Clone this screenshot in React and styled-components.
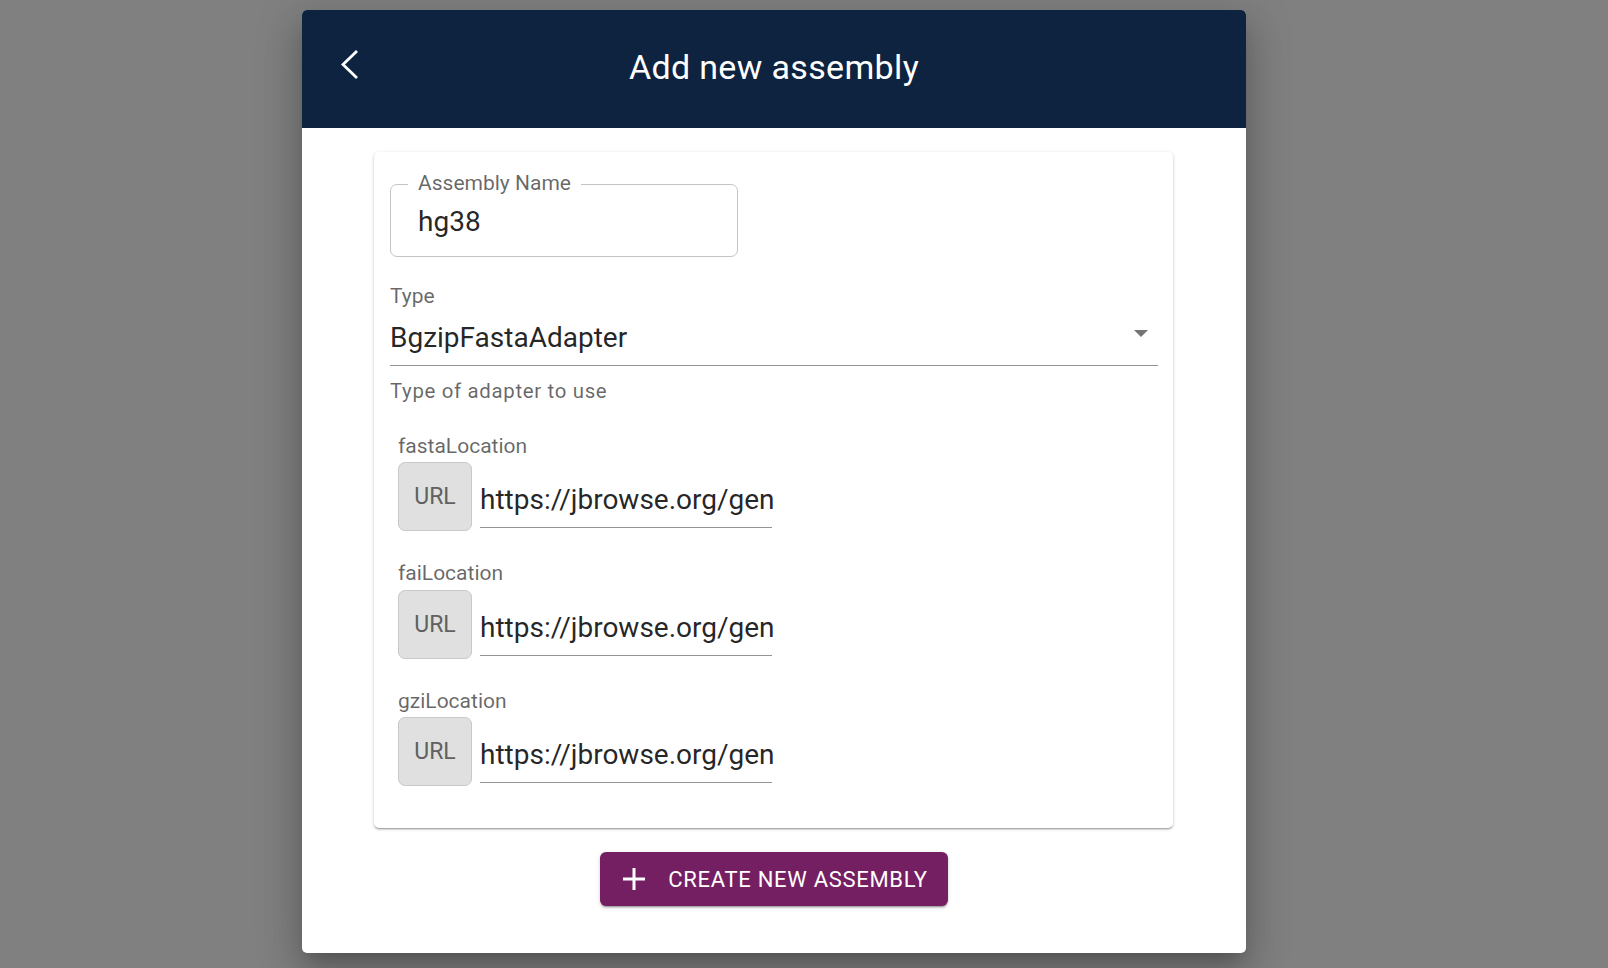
import React from 'react';

// STYLES
import styled, { createGlobalStyle } from 'styled-components';

const GlobalStyle = createGlobalStyle`
  html,
  body {
    margin: 0;
    height: 100%;
  }

  body {
    background-color: #808080;
    font-family: Roboto, 'Liberation Sans', sans-serif;
    overflow: hidden;
  }
`;

const Backdrop = styled.div`
  height: 968px;
  padding: 10px 0 0 302px;
  box-sizing: border-box;
`;

const StyledDialog = styled.div`
  width: 944px;
  height: 943px;
  background-color: #fff;
  border-radius: 5px;
  overflow: hidden;
  box-shadow: 0 11px 15px -7px rgba(0, 0, 0, 0.2),
    0 24px 38px 3px rgba(0, 0, 0, 0.14), 0 9px 46px 8px rgba(0, 0, 0, 0.12);
  display: flex;
  flex-direction: column;
  align-items: center;
`;

const StyledHeader = styled.header`
  align-self: stretch;
  height: 118px;
  display: grid;
  grid-template-columns: 1fr auto 1fr;
  align-items: center;
  background-color: #0e2340;
  color: #fff;
`;

const BackButton = styled.button`
  justify-self: start;
  display: flex;
  margin: 0 0 9px 38px;
  padding: 0;
  border: none;
  background: none;
  color: inherit;
  cursor: pointer;
`;

const Title = styled.h2`
  margin: 0 0 3px;
  font-size: 34px;
  font-weight: 400;
  letter-spacing: 0.35px;
  line-height: 1.2;
`;

const StyledCard = styled.section`
  width: 799px;
  box-sizing: border-box;
  margin: 24px 0 0 -1px;
  padding: 16px 15px 42px 16px;
  background-color: #fff;
  border-radius: 5px;
  box-shadow: 0 2px 2px -1px rgba(0, 0, 0, 0.25),
    0 1px 2px 0 rgba(0, 0, 0, 0.14), 0 1px 4px 0 rgba(0, 0, 0, 0.12);
`;

const OutlinedField = styled.div`
  position: relative;
  width: 348px;
  height: 73px;
  box-sizing: border-box;
  margin-top: 16px;
  padding: 17px 25px 0 27px;
  border: 1px solid #c4c4c4;
  border-radius: 7px;
`;

const FloatingLabel = styled.span`
  position: absolute;
  top: -14px;
  left: 17px;
  padding: 0 10px;
  background-color: #fff;
  font-size: 21px;
  line-height: 24px;
  color: rgba(0, 0, 0, 0.6);
`;

const TextInput = styled.input`
  display: block;
  width: ${(props) => (props.$bleed ? 'calc(100% + 2px)' : '100%')};
  height: 40px;
  margin: 0;
  padding: 0;
  border: none;
  outline: none;
  background: none;
  font-family: inherit;
  font-size: 28px;
  line-height: 40px;
  color: rgba(0, 0, 0, 0.87);
`;

const FieldLabel = styled.label`
  display: block;
  margin-top: ${(props) => props.$top || 0}px;
  font-size: 21px;
  line-height: 24px;
  color: rgba(0, 0, 0, 0.6);
`;

const SelectRow = styled.div`
  display: flex;
  align-items: center;
  margin-top: 6px;
  padding: 4px 0 8px;
  border-bottom: 1px solid #949494;
`;

const SelectValue = styled.span`
  flex: 1;
  font-size: 28px;
  line-height: 39px;
  color: rgba(0, 0, 0, 0.87);
`;

const ArrowDown = styled.span`
  width: 0;
  height: 0;
  margin: 0 10px 8px 0;
  border-left: 7px solid transparent;
  border-right: 7px solid transparent;
  border-top: 7px solid #757575;
`;

const HelperText = styled.p`
  margin: 13px 0 0;
  font-size: 20.4px;
  line-height: 24px;
  letter-spacing: 0.033em;
  color: rgba(0, 0, 0, 0.6);
`;

const LocationList = styled.div`
  display: flex;
  flex-direction: column;
  gap: 30px;
  margin-top: 31px;
  padding-left: 8px;
`;

const LocationRow = styled.div`
  display: flex;
  align-items: flex-start;
  gap: 8px;
  margin-top: 4.5px;
`;

const UrlToggle = styled.button`
  width: 74px;
  height: 69px;
  box-sizing: border-box;
  padding: 0;
  border: 1px solid #c9c9c9;
  border-radius: 7px;
  background-color: #e0e0e0;
  font-family: inherit;
  font-size: 23px;
  color: #616161;
`;

const UrlField = styled.div`
  width: 292px;
  padding: 18px 0 7px;
  border-bottom: 1px solid #949494;
`;

const SubmitButton = styled.button`
  display: flex;
  align-items: center;
  gap: 23px;
  height: 54px;
  margin-top: 24px;
  padding: 0 20px 0 23px;
  border: none;
  border-radius: 6px;
  background-color: #741f62;
  box-shadow: 0 3px 1px -2px rgba(0, 0, 0, 0.2), 0 2px 2px 0 rgba(0, 0, 0, 0.14),
    0 1px 5px 0 rgba(0, 0, 0, 0.12);
  font-family: inherit;
  font-size: 22px;
  font-weight: 400;
  letter-spacing: 0.7px;
  text-transform: uppercase;
  color: #fff;
`;

const locations = [
  {
    name: 'fastaLocation',
    uri: 'https://jbrowse.org/genomes/GRCh38/fasta/hg38.prefix.fa.gz',
  },
  {
    name: 'faiLocation',
    uri: 'https://jbrowse.org/genomes/GRCh38/fasta/hg38.prefix.fa.gz.fai',
  },
  {
    name: 'gziLocation',
    uri: 'https://jbrowse.org/genomes/GRCh38/fasta/hg38.prefix.fa.gz.gzi',
  },
];

const ChevronLeft = () => (
  <svg width="18" height="29" viewBox="0 0 18 29" fill="none">
    <path
      d="M16 2 L3 14.5 L16 27"
      stroke="currentColor"
      strokeWidth="2.8"
      strokeLinecap="square"
    />
  </svg>
);

const PlusIcon = () => (
  <svg width="22" height="22" viewBox="0 0 22 22">
    <path d="M11 0 V22 M0 11 H22" stroke="#fff" strokeWidth="3" />
  </svg>
);

const App = () => (
  <>
    <GlobalStyle />
    <Backdrop>
      <StyledDialog>
        <StyledHeader>
          <BackButton aria-label="back">
            <ChevronLeft />
          </BackButton>
          <Title>Add new assembly</Title>
        </StyledHeader>

        <StyledCard>
          <OutlinedField>
            <FloatingLabel>Assembly Name</FloatingLabel>
            <TextInput defaultValue="hg38" />
          </OutlinedField>

          <FieldLabel $top={26.5}>Type</FieldLabel>
          <SelectRow>
            <SelectValue>BgzipFastaAdapter</SelectValue>
            <ArrowDown />
          </SelectRow>
          <HelperText>Type of adapter to use</HelperText>

          <LocationList>
            {locations.map((loc) => (
              <div key={loc.name}>
                <FieldLabel>{loc.name}</FieldLabel>
                <LocationRow>
                  <UrlToggle>URL</UrlToggle>
                  <UrlField>
                    <TextInput $bleed defaultValue={loc.uri} />
                  </UrlField>
                </LocationRow>
              </div>
            ))}
          </LocationList>
        </StyledCard>

        <SubmitButton>
          <PlusIcon />
          Create new assembly
        </SubmitButton>
      </StyledDialog>
    </Backdrop>
  </>
);

export default App;
